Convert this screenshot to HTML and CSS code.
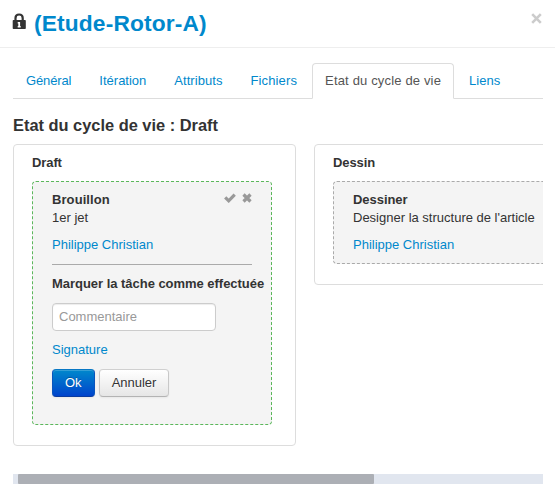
FILE: index.html
```html
<!DOCTYPE html>
<html lang="fr">
<head>
<meta charset="utf-8">
<title>Etude-Rotor-A</title>
<link rel="stylesheet" href="styles.css">
</head>
<body>
<header class="modal-header">
  <svg class="lock" width="14" height="17" viewBox="0 0 14 17"><path d="M3.500 8V5q0-3.500 3.600-3.500T10.700 5v3" fill="none" stroke="#333" stroke-width="2.200"/><path fill="#333" fill-rule="evenodd" d="M1.500 7h11.500q.8 0 .8.800v7.400q0 .8-.8.800H1.500q-.8 0-.8-.8V7.800q0-.8.800-.8zM5.700 9v1.500h.6v2.500h-.6v1.500h3v-1.500h-.6V9z"/></svg>
  <h3><a href="#">(Etude-Rotor-A)</a></h3>
  <button class="close" aria-label="Fermer"><svg width="11" height="11" viewBox="0 0 11 11"><path d="M1.200 1.200l8.600 8.600M9.800 1.200L1.200 9.800" stroke="#ccc" stroke-width="2.600"/></svg></button>
</header>
<main class="modal-body">
  <nav class="tabs">
    <a href="#">Général</a>
    <a href="#">Itération</a>
    <a href="#">Attributs</a>
    <a href="#">Fichiers</a>
    <a href="#" class="active">Etat du cycle de vie</a>
    <a href="#">Liens</a>
  </nav>
  <h4>Etat du cycle de vie : Draft</h4>
  <div class="activities">
    <section class="activity">
      <h5>Draft</h5>
      <div class="task in-progress">
        <div class="task-head">
          <b>Brouillon</b>
          <span class="actions">
            <svg width="12" height="10" viewBox="0 0 12 10"><path d="M1.200 4.400l3.500 3.400 6-6.200" fill="none" stroke="#999" stroke-width="3.200"/></svg>
            <svg width="10" height="10" viewBox="0 0 10 10"><path d="M1.500 1.500l7 7M8.500 1.500l-7 7" stroke="#999" stroke-width="3.200"/></svg>
          </span>
        </div>
        <p>1er jet</p>
        <a class="user" href="#">Philippe Christian</a>
        <form class="closing">
          <b class="legend">Marquer la tâche comme effectuée</b>
          <input type="text" placeholder="Commentaire">
          <a class="sign" href="#">Signature</a>
          <div class="buttons">
            <button type="button" class="btn primary">Ok</button>
            <button type="button" class="btn">Annuler</button>
          </div>
        </form>
      </div>
    </section>
    <section class="activity">
      <h5>Dessin</h5>
      <div class="task">
        <div class="task-head"><b>Dessiner</b></div>
        <p>Designer la structure de l'article</p>
        <a class="user" href="#">Philippe Christian</a>
      </div>
    </section>
  </div>
  <div class="scrollbar"><div class="thumb"></div></div>
</main>
</body>
</html>
```
FILE: styles.css
```css
* { box-sizing: border-box; }
body {
  margin: 0;
  height: 496px;
  overflow: hidden;
  background: #fff;
  color: #333;
  font: 13px/18px "Liberation Sans", Arial, sans-serif;
}
a { color: #08c; text-decoration: none; }
h3, h4, h5, p { margin: 0; }

.modal-header {
  display: flex;
  align-items: flex-start;
  height: 48px;
  padding: 9px 13px 0 12px;
  border-bottom: 1px solid #eee;
}
.lock { margin: 4px 8px 0 0; }
h3 { font-size: 22.750px; line-height: 29px; letter-spacing: .15px; }
.close {
  display: flex;
  margin: 4px 0 0 auto;
  padding: 0;
  border: 0;
  background: none;
}

.modal-body { padding: 15px 12px 0 13px; }
.tabs {
  display: flex;
  gap: 2px;
  height: 36px;
  border-bottom: 1px solid #ddd;
}
.tabs a {
  height: 36px;
  padding: 8px 12px;
  border: 1px solid transparent;
  border-radius: 4px 4px 0 0;
  white-space: nowrap;
}
.tabs a:first-child { letter-spacing: -.13px; }
.tabs a:nth-child(3) { letter-spacing: .05px; }
.tabs a:nth-child(4) { letter-spacing: .14px; }
.tabs .active {
  color: #555;
  background: #fff;
  border-color: #ddd;
  border-bottom-color: #fff;
  letter-spacing: .16px;
}
h4 {
  margin-top: 17px;
  font-size: 16.400px;
  line-height: 18px;
}

.activities {
  display: flex;
  align-items: flex-start;
  gap: 18px;
  height: 330px;
  margin-top: 10px;
  overflow: hidden;
}
.activity {
  flex: 0 0 283px;
  padding: 9px 23px 20px 18px;
  border: 1px solid #ddd;
  border-radius: 4px;
}
h5 { font-size: 13px; line-height: 18px; letter-spacing: -.1px; }
.task {
  width: 240px;
  height: 83px;
  margin-top: 9px;
  padding: 9px 19px;
  border: 1px dashed #aaa;
  border-radius: 4px;
  background: #f4f4f4;
  white-space: nowrap;
}
.in-progress { height: 244px; border-color: #5bb75b; }
.task-head { display: flex; justify-content: space-between; height: 18px; letter-spacing: .08px; }
.task:not(.in-progress) .task-head { letter-spacing: -.05px; }
.actions { display: flex; gap: 6px; padding-top: 2px; }
.user { display: block; margin-top: 9px; }
.closing {
  display: flex;
  flex-direction: column;
  align-items: flex-start;
  margin-top: 10px;
  padding-top: 10px;
  border-top: 1px solid #aaa;
}
.legend { letter-spacing: -.03px; }
input {
  width: 164px;
  height: 28px;
  margin-top: 10px;
  padding: 3px 6px 5px;
  border: 1px solid #ccc;
  border-radius: 4px;
  box-shadow: inset 0 1px 1px rgba(0,0,0,.075);
  font: inherit;
}
input::placeholder { color: #999; }
.sign { margin-top: 10px; }
.buttons { display: flex; gap: 4px; margin-top: 10px; }
.btn {
  height: 28px;
  padding: 0 12px;
  border: 1px solid #ccc;
  border-color: #d0d0d0 #c8c8c8 #b3b3b3;
  border-radius: 4px;
  background: linear-gradient(#fff, #e6e6e6);
  box-shadow: inset 0 1px 0 rgba(255,255,255,.2), 0 1px 2px rgba(0,0,0,.05);
  color: #333;
  font: inherit;
  text-shadow: 0 1px 1px rgba(255,255,255,.75);
}
.primary {
  border-color: #0777c4 #0a55bd #0a3b9e;
  background: linear-gradient(#08c, #04c);
  color: #fff;
  text-shadow: 0 -1px 0 rgba(0,0,0,.25);
}
.scrollbar { height: 10px; padding-left: 5px; background: #e1e6ef; }
.thumb { width: 356px; height: 10px; border-radius: 1px; background: #acafb5; }
```
